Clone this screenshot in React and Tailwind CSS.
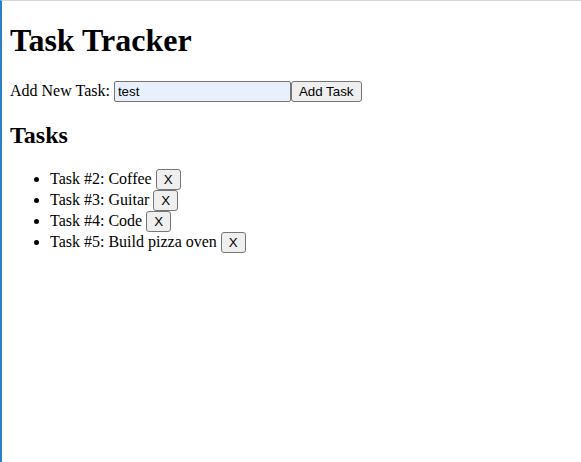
import { useState } from 'react'

const serif = { fontFamily: '"Liberation Serif", "Times New Roman", serif' }

export default function App() {
  const [text, setText] = useState('test')
  const [tasks, setTasks] = useState([
    { id: 2, name: 'Coffee' },
    { id: 3, name: 'Guitar' },
    { id: 4, name: 'Code' },
    { id: 5, name: 'Build pizza oven' },
  ])

  function remove(id) {
    setTasks(tasks.filter(t => t.id !== id))
  }

  const control = "font-['Liberation_Sans',Arial,sans-serif] text-[13.33px] leading-[normal] text-black"

  return (
    <div className="min-h-screen border-l-2 border-l-[#2a7fc6] border-t border-t-[#d6d6d6] bg-white">
      <div className="px-2 pb-2 text-base leading-[normal] text-black font-['Liberation_Serif','Times_New_Roman',serif]" style={serif}>
        <h1 className="pt-[21.44px] mb-[21.44px] text-[32px] font-bold leading-[normal]">Task Tracker</h1>

        <div>
          Add New Task:{' '}
          <input
            value={text}
            onChange={e => setText(e.target.value)}
            className={`${control} inline-block w-[177px] h-[21px] px-[3px] border border-[#767676] rounded-[2px] bg-[#e8f0fe] align-baseline outline-none`}
          />
          <button className={`${control} inline-block h-[21px] px-[7px] border border-[#767676] rounded-[3px] bg-[#efefef] align-baseline`}>
            Add Task
          </button>
        </div>

        <h2 className="mt-[19.92px] mb-[19.92px] text-2xl font-bold leading-[normal]">Tasks</h2>

        <ul className="list-disc pl-10 my-4">
          {tasks.map(t => (
            <li key={t.id}>
              Task #{t.id}: {t.name}{' '}
              <button
                onClick={() => remove(t.id)}
                className={`${control} inline-block h-[21px] px-[7px] border border-[#767676] rounded-[3px] bg-[#efefef] align-baseline`}
              >
                X
              </button>
            </li>
          ))}
        </ul>
      </div>
    </div>
  )
}
